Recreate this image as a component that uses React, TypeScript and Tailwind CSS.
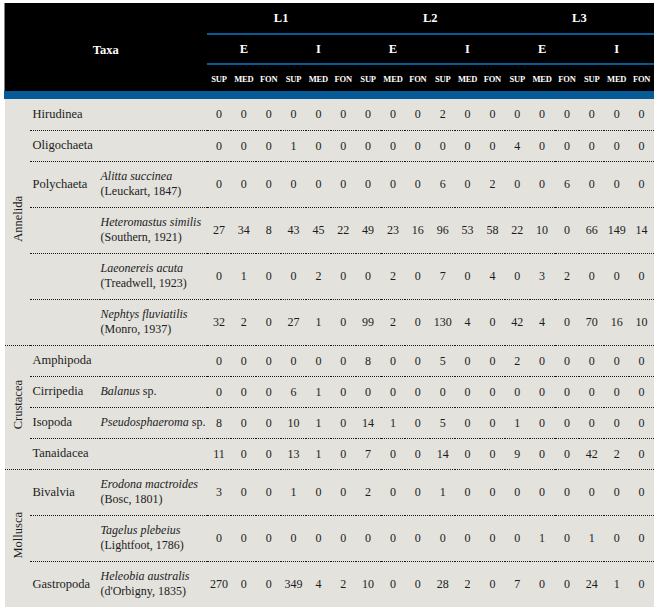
type Row = {
  cls?: string;
  sp?: string;
  spTail?: string;
  author?: string;
  v: number[];
};

type Group = { name: string; rows: Row[] };

const groups: Group[] = [
  {
    name: "Annelida",
    rows: [
      { cls: "Hirudinea", v: [0, 0, 0, 0, 0, 0, 0, 0, 0, 2, 0, 0, 0, 0, 0, 0, 0, 0] },
      { cls: "Oligochaeta", v: [0, 0, 0, 1, 0, 0, 0, 0, 0, 0, 0, 0, 4, 0, 0, 0, 0, 0] },
      {
        cls: "Polychaeta",
        sp: "Alitta succinea",
        author: "(Leuckart, 1847)",
        v: [0, 0, 0, 0, 0, 0, 0, 0, 0, 6, 0, 2, 0, 0, 6, 0, 0, 0],
      },
      {
        sp: "Heteromastus similis",
        author: "(Southern, 1921)",
        v: [27, 34, 8, 43, 45, 22, 49, 23, 16, 96, 53, 58, 22, 10, 0, 66, 149, 14],
      },
      {
        sp: "Laeonereis acuta",
        author: "(Treadwell, 1923)",
        v: [0, 1, 0, 0, 2, 0, 0, 2, 0, 7, 0, 4, 0, 3, 2, 0, 0, 0],
      },
      {
        sp: "Nephtys fluviatilis",
        author: "(Monro, 1937)",
        v: [32, 2, 0, 27, 1, 0, 99, 2, 0, 130, 4, 0, 42, 4, 0, 70, 16, 10],
      },
    ],
  },
  {
    name: "Crustacea",
    rows: [
      { cls: "Amphipoda", v: [0, 0, 0, 0, 0, 0, 8, 0, 0, 5, 0, 0, 2, 0, 0, 0, 0, 0] },
      { cls: "Cirripedia", sp: "Balanus", spTail: " sp.", v: [0, 0, 0, 6, 1, 0, 0, 0, 0, 0, 0, 0, 0, 0, 0, 0, 0, 0] },
      { cls: "Isopoda", sp: "Pseudosphaeroma", spTail: " sp.", v: [8, 0, 0, 10, 1, 0, 14, 1, 0, 5, 0, 0, 1, 0, 0, 0, 0, 0] },
      { cls: "Tanaidacea", v: [11, 0, 0, 13, 1, 0, 7, 0, 0, 14, 0, 0, 9, 0, 0, 42, 2, 0] },
    ],
  },
  {
    name: "Mollusca",
    rows: [
      {
        cls: "Bivalvia",
        sp: "Erodona mactroides",
        author: "(Bosc, 1801)",
        v: [3, 0, 0, 1, 0, 0, 2, 0, 0, 1, 0, 0, 0, 0, 0, 0, 0, 0],
      },
      {
        sp: "Tagelus plebeius",
        author: "(Lightfoot, 1786)",
        v: [0, 0, 0, 0, 0, 0, 0, 0, 0, 0, 0, 0, 0, 1, 0, 1, 0, 0],
      },
      {
        cls: "Gastropoda",
        sp: "Heleobia australis",
        author: "(d'Orbigny, 1835)",
        v: [270, 0, 0, 349, 4, 2, 10, 0, 0, 28, 2, 0, 7, 0, 0, 24, 1, 0],
      },
    ],
  },
];

const levels = ["L1", "L2", "L3"];
const zones = ["E", "I"];
const depths = ["SUP", "MED", "FON"];

export default function App() {
  return (
    <div className="min-h-screen bg-white pt-[3px] pl-[4px] font-[family-name:'Liberation_Serif',serif] text-[#1c1c1c]">
      <table className="w-[650px] table-fixed border-collapse font-[family-name:'Liberation_Serif',serif] text-[12px]">
        <colgroup>
          <col className="w-[25px]" />
          <col className="w-[70px]" />
          <col className="w-[107px]" />
          {Array.from({ length: 18 }).map((_, i) => (
            <col key={i} />
          ))}
        </colgroup>
        <thead className="bg-black font-bold text-white">
          <tr className="h-[31px]">
            <th colSpan={3} rowSpan={3} className="border-l border-l-[#808080] pt-[6px] text-center align-middle text-[12.5px]">
              Taxa
            </th>
            {levels.map((l) => (
              <th key={l} colSpan={6} className="border-b-2 border-b-[#075a98] text-center align-middle text-[12.5px]">
                {l}
              </th>
            ))}
          </tr>
          <tr className="h-[30px]">
            {levels.flatMap((l) =>
              zones.map((z) => (
                <th key={l + z} colSpan={3} className="border-b-2 border-b-[#075a98] text-center align-middle text-[12.5px]">
                  {z}
                </th>
              ))
            )}
          </tr>
          <tr className="h-[27px]">
            {Array.from({ length: 6 }).flatMap((_, k) =>
              depths.map((d) => (
                <th key={k + d} className="whitespace-nowrap pt-[2px] text-center align-middle text-[8.5px] leading-none tracking-[-0.2px]">
                  {d}
                </th>
              ))
            )}
          </tr>
          <tr className="h-[8px] bg-[#075a98]">
            <td colSpan={21} className="border-l border-l-[#075a98] p-0" />
          </tr>
        </thead>
        <tbody className="bg-[#e3e2dd]">
          {groups.map((g, gi) => {
            const lastGroup = gi === groups.length - 1;
            return g.rows.map((r, ri) => {
              const last = ri === g.rows.length - 1;
              const line = last && lastGroup ? "" : "border-b border-dotted border-b-[#1a1a1a]";
              return (
                <tr key={g.name + ri} className={r.author ? "h-[46px]" : "h-[31px]"}>
                  {ri === 0 && (
                    <td
                      rowSpan={g.rows.length}
                      className={`${lastGroup ? "" : "border-b border-dotted border-b-[#1a1a1a]"} pl-[2px] text-center align-middle`}
                    >
                      <span className="inline-block rotate-180 whitespace-nowrap text-[12.5px] [writing-mode:vertical-rl]">
                        {g.name}
                      </span>
                    </td>
                  )}
                  <td className={`${line} whitespace-nowrap pl-[3px] align-middle text-[12.5px]`}>{r.cls}</td>
                  <td className={`${line} whitespace-nowrap pl-[1px] align-middle leading-[15px]`}>
                    {r.sp && (
                      <div>
                        <i>{r.sp}</i>
                        {r.spTail}
                      </div>
                    )}
                    {r.author && <div>{r.author}</div>}
                  </td>
                  {r.v.map((n, i) => (
                    <td key={i} className={`${line} text-center align-middle`}>
                      {n}
                    </td>
                  ))}
                </tr>
              );
            });
          })}
        </tbody>
      </table>
    </div>
  );
}
